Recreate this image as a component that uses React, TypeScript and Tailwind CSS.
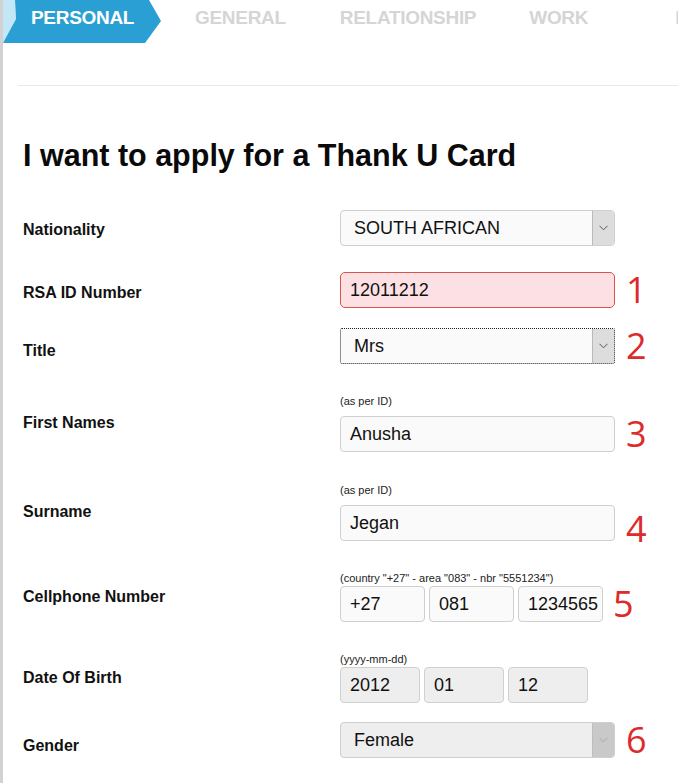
import React from 'react';

const font = { fontFamily: '"Liberation Sans", Arial, sans-serif' };

function Chevron({ light }: { light?: boolean }) {
  return (
    <svg width="9" height="6" viewBox="0 0 9 6" className="block">
      <path d="M0.5 0.8 L4.5 4.8 L8.5 0.8" fill="none" stroke={light ? '#a8a8a8' : '#555'} strokeWidth="1" />
    </svg>
  );
}

function Select({ value, tone = 'normal' }: { value: string; tone?: 'normal' | 'focus' | 'disabled' }) {
  const box =
    tone === 'focus'
      ? 'border border-dotted border-[#222] rounded-[2px] bg-[#fafafa]'
      : tone === 'disabled'
        ? 'border border-[#cfcfcf] rounded-[4px] bg-[#eeeeee]'
        : 'border border-[#cfcfcf] rounded-[4px] bg-[#fafafa]';
  const arrow = tone === 'disabled' ? 'bg-[#c9c9c9] border-[#bdbdbd]' : 'bg-[#dddddd] border-[#b9b9b9]';
  return (
    <div className={`flex h-[36px] w-[275px] overflow-hidden ${box}`}>
      <div className="flex flex-1 items-center pl-[13px] text-[18px] text-[#111]">{value}</div>
      <div className={`flex w-[22px] items-center justify-center border-l ${arrow}`}>
        <Chevron light={tone === 'disabled'} />
      </div>
    </div>
  );
}

function Input({ value, w, error, disabled }: { value: string; w: string; error?: boolean; disabled?: boolean }) {
  const cls = error
    ? 'border-[#d9534f] bg-[#fde0e3] rounded-[5px]'
    : disabled
      ? 'border-[#d0d0d0] bg-[#eeeeee] rounded-[4px]'
      : 'border-[#cfcfcf] bg-[#fafafa] rounded-[4px]';
  return (
    <div className={`flex h-[36px] items-center border pl-[9px] text-[18px] text-[#111] ${w} ${cls}`}>{value}</div>
  );
}

function Hint({ children }: { children: React.ReactNode }) {
  return <div className="h-[12px] text-[11px] leading-[12px] whitespace-nowrap text-[#222]">{children}</div>;
}

function Num({ n, ml = 'ml-[11px]' }: { n: string; ml?: string }) {
  return (
    <span
      className={`${ml} text-[36px] leading-[36px] text-[#dd2a2a]`}
      style={{ fontFamily: '"Open Sans", "Noto Sans", sans-serif' }}
    >
      {n}
    </span>
  );
}

function Row({ label, pt, mt, children }: { label: string; pt: string; mt: string; children: React.ReactNode }) {
  return (
    <div className={`flex items-start ${mt}`}>
      <div className={`w-[317px] shrink-0 text-[16px] leading-[18px] font-bold text-[#111] ${pt}`}>{label}</div>
      <div>{children}</div>
    </div>
  );
}

export default function App() {
  const tabs = [
    { name: 'GENERAL', x: 'ml-[34px]' },
    { name: 'RELATIONSHIP', x: 'ml-[54px]' },
    { name: 'WORK', x: 'ml-[53px]' },
    { name: 'EMPLOYMENT', x: 'ml-[87px]' },
  ];

  return (
    <div className="h-[783px] w-[678px] overflow-hidden bg-white" style={font}>
      <div className="flex h-full">
        <div className="w-[3px] shrink-0 bg-[#d2d2d2]" />
        <div className="min-w-0 flex-1 overflow-hidden">
          <div className="flex h-[43px] items-start whitespace-nowrap">
            <div className="relative h-[43px] w-[158px] shrink-0">
              <div className="absolute inset-0 bg-[#c4e7f7] [clip-path:polygon(0_0,12px_0,13px_19px,0_43px)]" />
              <div className="absolute inset-0 flex items-start bg-[#2a9fd4] pl-[28px] pt-[7px] [clip-path:polygon(0_0,146px_0,158px_21px,142px_43px,0_43px,13px_19px,12px_0)]">
                <span className="text-[19px] leading-[22px] font-bold tracking-[-0.3px] text-white">PERSONAL</span>
              </div>
            </div>
            {tabs.map((t) => (
              <span key={t.name} className={`${t.x} shrink-0 pt-[7px] text-[19px] leading-[22px] font-bold tracking-[-0.3px] text-[#d5d5d5]`}>
                {t.name}
              </span>
            ))}
          </div>

          <div className="ml-[15px] mt-[42px] h-px bg-[#e8e8e8]" />

          <div className="pl-[20px]">
            <h1 className="mt-[51px] text-[30.5px] leading-[36px] font-bold text-[#0a0a0a]">
              I want to apply for a Thank U Card
            </h1>

            <Row label="Nationality" pt="pt-[11px]" mt="mt-[37px]">
              <Select value="SOUTH AFRICAN" />
            </Row>

            <Row label="RSA ID Number" pt="pt-[12px]" mt="mt-[26px]">
              <div className="flex items-center">
                <Input value="12011212" w="w-[275px]" error />
                <Num n="1" />
              </div>
            </Row>

            <Row label="Title" pt="pt-[14px]" mt="mt-[20px]">
              <div className="flex items-center">
                <Select value="Mrs" tone="focus" />
                <Num n="2" />
              </div>
            </Row>

            <Row label="First Names" pt="pt-[19px]" mt="mt-[31px]">
              <Hint>(as per ID)</Hint>
              <div className="mt-[9px] flex items-center">
                <Input value="Anusha" w="w-[275px]" />
                <Num n="3" />
              </div>
            </Row>

            <Row label="Surname" pt="pt-[19px]" mt="mt-[32px]">
              <Hint>(as per ID)</Hint>
              <div className="mt-[9px] flex items-center">
                <Input value="Jegan" w="w-[275px]" />
                <Num n="4" ml="ml-[11px] translate-y-[6px]" />
              </div>
            </Row>

            <Row label="Cellphone Number" pt="pt-[16px]" mt="mt-[31px]">
              <Hint>(country "+27" - area "083" - nbr "5551234")</Hint>
              <div className="mt-[2px] flex items-center gap-[4px]">
                <Input value="+27" w="w-[85px]" />
                <Input value="081" w="w-[85px]" />
                <Input value="1234565" w="w-[85px]" />
                <Num n="5" ml="ml-[6px]" />
              </div>
            </Row>

            <Row label="Date Of Birth" pt="pt-[16px]" mt="mt-[31px]">
              <Hint>(yyyy-mm-dd)</Hint>
              <div className="mt-[2px] flex items-center gap-[4px]">
                <Input value="2012" w="w-[80px]" disabled />
                <Input value="01" w="w-[80px]" disabled />
                <Input value="12" w="w-[80px]" disabled />
              </div>
            </Row>

            <Row label="Gender" pt="pt-[15px]" mt="mt-[19px]">
              <div className="flex items-center">
                <Select value="Female" tone="disabled" />
                <Num n="6" />
              </div>
            </Row>
          </div>
        </div>
      </div>
    </div>
  );
}
